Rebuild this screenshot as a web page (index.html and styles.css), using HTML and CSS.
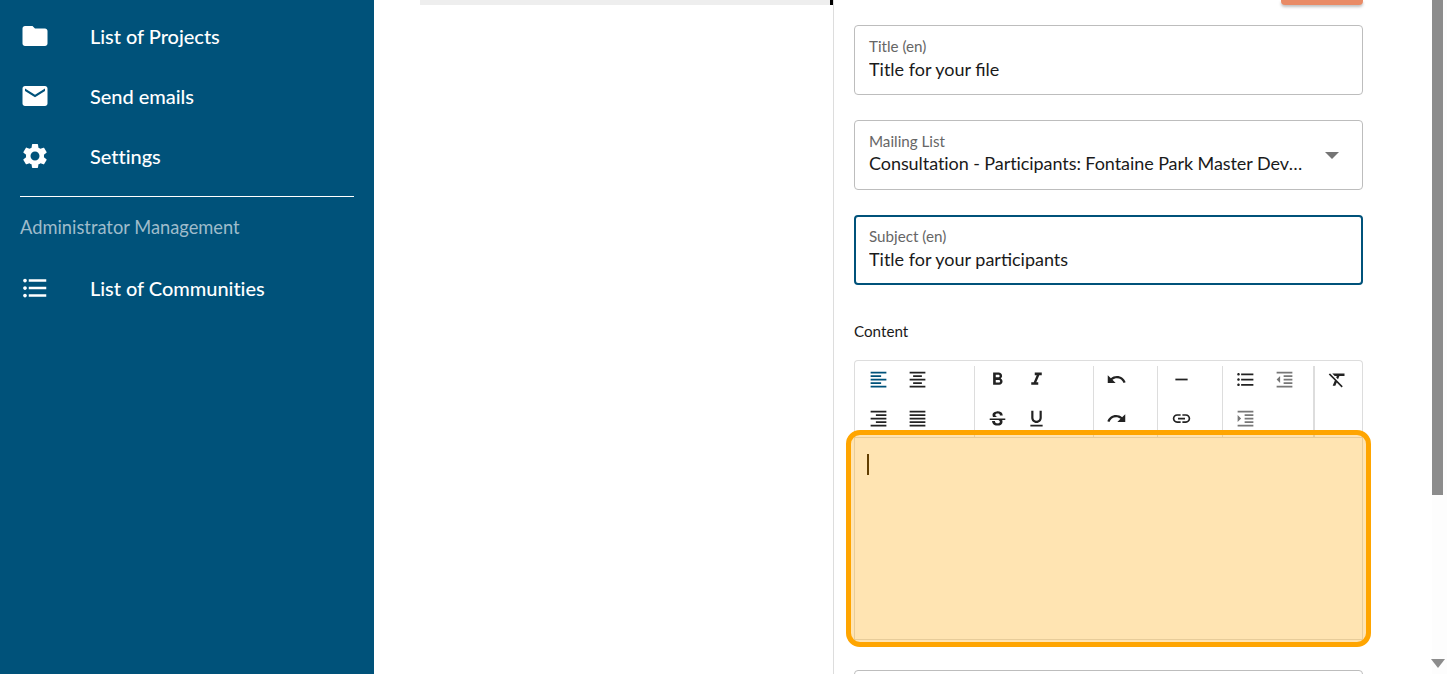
FILE: index.html
```html
<!DOCTYPE html>
<html lang="en">
<head>
    <meta charset="UTF-8">
    <title>Send emails</title>
    <link rel="stylesheet" href="styles.css">
</head>
<body>
    <div class="app">
        <nav class="sidebar">
            <a class="nav-item">
                <svg class="nav-icon" viewBox="0 0 24 24"><path d="M10 4H4c-1.1 0-2 .9-2 2v12c0 1.1.9 2 2 2h16c1.1 0 2-.9 2-2V8c0-1.1-.9-2-2-2h-8l-2-2z"/></svg>
                <span>List of Projects</span>
            </a>
            <a class="nav-item">
                <svg class="nav-icon" viewBox="0 0 24 24"><path d="M20 4H4c-1.1 0-1.99.9-1.99 2L2 18c0 1.1.9 2 2 2h16c1.1 0 2-.9 2-2V6c0-1.1-.9-2-2-2zm0 4l-8 5-8-5V6l8 5 8-5v2z"/></svg>
                <span>Send emails</span>
            </a>
            <a class="nav-item">
                <svg class="nav-icon" viewBox="0 0 24 24"><path d="M19.14 12.94c.04-.3.06-.61.06-.94 0-.32-.02-.64-.07-.94l2.03-1.58c.18-.14.23-.41.12-.61l-1.92-3.32c-.12-.22-.37-.29-.59-.22l-2.39.96c-.5-.38-1.03-.7-1.62-.94l-.36-2.54c-.04-.24-.24-.41-.48-.41h-3.84c-.24 0-.43.17-.47.41l-.36 2.54c-.59.24-1.13.57-1.62.94l-2.39-.96c-.22-.08-.47 0-.59.22L2.74 8.87c-.12.21-.08.47.12.61l2.03 1.58c-.05.3-.09.63-.09.94s.02.64.07.94l-2.03 1.58c-.18.14-.23.41-.12.61l1.92 3.32c.12.22.37.29.59.22l2.39-.96c.5.38 1.03.7 1.62.94l.36 2.54c.05.24.24.41.48.41h3.84c.24 0 .44-.17.47-.41l.36-2.54c.59-.24 1.13-.56 1.62-.94l2.39.96c.22.08.47 0 .59-.22l1.92-3.32c.12-.22.07-.47-.12-.61l-2.01-1.58zM12 15.6c-1.98 0-3.6-1.62-3.6-3.6s1.62-3.6 3.6-3.6 3.6 1.62 3.6 3.6-1.62 3.6-3.6 3.6z"/></svg>
                <span>Settings</span>
            </a>
            <div class="nav-divider"></div>
            <div class="nav-heading">Administrator Management</div>
            <a class="nav-item">
                <svg class="nav-icon" viewBox="0 0 24 24"><path d="M4 10.5c-.83 0-1.5.67-1.5 1.5s.67 1.5 1.5 1.5 1.5-.67 1.5-1.5-.67-1.5-1.5-1.5zm0-6c-.83 0-1.5.67-1.5 1.5S3.17 7.5 4 7.5 5.5 6.83 5.5 6 4.83 4.5 4 4.5zm0 12c-.83 0-1.5.68-1.5 1.5s.68 1.5 1.5 1.5 1.5-.68 1.5-1.5-.67-1.5-1.5-1.5zM7 19h14v-2H7v2zm0-6h14v-2H7v2zm0-8v2h14V5H7z"/></svg>
                <span>List of Communities</span>
            </a>
        </nav>

        <div class="preview-column">
            <div class="preview-bar"></div>
        </div>

        <main class="form-panel">
            <div class="form-actions">
                <button class="save-btn"></button>
            </div>

            <div class="field">
                <div class="field-label">Title (en)</div>
                <div class="field-value">Title for your file</div>
            </div>

            <div class="field field-select">
                <div class="field-text">
                    <div class="field-label">Mailing List</div>
                    <div class="field-value">Consultation - Participants: Fontaine Park Master Development Plan</div>
                </div>
                <span class="select-arrow"></span>
            </div>

            <div class="field field-focus">
                <div class="field-label">Subject (en)</div>
                <div class="field-value">Title for your participants</div>
            </div>

            <div class="content-label">Content</div>

            <div class="editor-toolbar">
                <div class="tool-group group-first">
                    <button class="tb-btn tb-active"><svg viewBox="0 0 24 24"><path d="M15 15H3v2h12v-2zm0-8H3v2h12V7zM3 13h18v-2H3v2zm0 8h18v-2H3v2zM3 3v2h18V3H3z"/></svg></button>
                    <button class="tb-btn"><svg viewBox="0 0 24 24"><path d="M7 15v2h10v-2H7zm-4 6h18v-2H3v2zm0-8h18v-2H3v2zm4-6v2h10V7H7zM3 3v2h18V3H3z"/></svg></button>
                    <button class="tb-btn"><svg viewBox="0 0 24 24"><path d="M3 21h18v-2H3v2zm6-4h12v-2H9v2zm-6-4h18v-2H3v2zm6-4h12V7H9v2zM3 3v2h18V3H3z"/></svg></button>
                    <button class="tb-btn"><svg viewBox="0 0 24 24"><path d="M3 21h18v-2H3v2zm0-4h18v-2H3v2zm0-4h18v-2H3v2zm0-4h18V7H3v2zm0-6v2h18V3H3z"/></svg></button>
                </div>
                <div class="tool-group group-marks">
                    <button class="tb-btn"><svg viewBox="0 0 24 24"><path d="M15.6 10.79c.97-.67 1.65-1.77 1.65-2.79 0-2.26-1.75-4-4-4H7v14h7.04c2.09 0 3.71-1.7 3.71-3.79 0-1.52-.86-2.82-2.15-3.42zM10 6.5h3c.83 0 1.5.67 1.5 1.5s-.67 1.5-1.5 1.5h-3v-3zm3.5 9H10v-3h3.5c.83 0 1.5.67 1.5 1.5s-.67 1.5-1.5 1.5z"/></svg></button>
                    <button class="tb-btn"><svg viewBox="0 0 24 24"><path d="M10 4v3h2.21l-3.42 8H6v3h8v-3h-2.21l3.42-8H18V4z"/></svg></button>
                    <button class="tb-btn tb-small"><svg viewBox="0 0 24 24"><path d="M23,12V14H18.61C19.61,16.14 19.56,22 12.38,22C4.05,22.05 4.37,15.5 4.37,15.5L8.34,15.55C8.37,18.92 11.5,18.92 12.12,18.88C12.76,18.83 15.15,18.84 15.34,16.5C15.42,15.41 14.32,14.58 13.12,14H1V12H23M19.41,7.89L15.43,7.86C15.43,7.86 15.6,5.09 12.15,5.08C8.7,5.06 9,7.28 9,7.56C9.04,7.84 9.34,9.22 12,9.88H5.71C5.71,9.88 2.22,3 10.74,2C19.45,1 19.41,7.89 19.41,7.89Z"/></svg></button>
                    <button class="tb-btn"><svg viewBox="0 0 24 24"><path d="M12 17c3.31 0 6-2.69 6-6V3h-2.5v8c0 1.93-1.57 3.5-3.5 3.5S8.5 12.93 8.5 11V3H6v8c0 3.31 2.69 6 6 6zm-7 2v2h14v-2H5z"/></svg></button>
                </div>
                <div class="tool-group group-history">
                    <button class="tb-btn"><svg viewBox="0 0 24 24"><path d="M12.5 8c-2.65 0-5.05.99-6.9 2.6L2 7v9h9l-3.62-3.62c1.39-1.16 3.16-1.88 5.12-1.88 3.54 0 6.55 2.31 7.6 5.5l2.37-.78C21.08 11.03 17.15 8 12.5 8z"/></svg></button>
                    <button class="tb-btn"><svg viewBox="0 0 24 24"><path d="M18.4 10.6C16.55 8.99 14.15 8 11.5 8c-4.65 0-8.58 3.03-9.96 7.22L3.9 16c1.05-3.19 4.05-5.5 7.6-5.5 1.95 0 3.73.72 5.12 1.88L13 16h9V7l-3.6 3.6z"/></svg></button>
                </div>
                <div class="tool-group group-insert">
                    <button class="tb-btn"><svg viewBox="0 0 24 24"><path d="M19 13H5v-2h14v2z"/></svg></button>
                    <button class="tb-btn"><svg viewBox="0 0 24 24"><path d="M3.9 12c0-1.71 1.39-3.1 3.1-3.1h4V7H7c-2.76 0-5 2.24-5 5s2.24 5 5 5h4v-1.9H7c-1.71 0-3.1-1.39-3.1-3.1zM8 13h8v-2H8v2zm9-6h-4v1.9h4c1.71 0 3.1 1.39 3.1 3.1s-1.39 3.1-3.1 3.1h-4V17h4c2.76 0 5-2.24 5-5s-2.24-5-5-5z"/></svg></button>
                </div>
                <div class="tool-group group-lists">
                    <button class="tb-btn"><svg viewBox="0 0 24 24"><path d="M4 10.5c-.83 0-1.5.67-1.5 1.5s.67 1.5 1.5 1.5 1.5-.67 1.5-1.5-.67-1.5-1.5-1.5zm0-6c-.83 0-1.5.67-1.5 1.5S3.17 7.5 4 7.5 5.5 6.83 5.5 6 4.83 4.5 4 4.5zm0 12c-.83 0-1.5.68-1.5 1.5s.68 1.5 1.5 1.5 1.5-.68 1.5-1.5-.67-1.5-1.5-1.5zM7 19h14v-2H7v2zm0-6h14v-2H7v2zm0-8v2h14V5H7z"/></svg></button>
                    <button class="tb-btn tb-disabled"><svg viewBox="0 0 24 24"><path d="M11 17h10v-2H11v2zm-8-5l4 4V8l-4 4zm0 9h18v-2H3v2zM3 3v2h18V3H3zm8 6h10V7H11v2zm0 4h10v-2H11v2z"/></svg></button>
                    <button class="tb-btn tb-disabled"><svg viewBox="0 0 24 24"><path d="M3 21h18v-2H3v2zM3 8v8l4-4-4-4zm8 9h10v-2H11v2zM3 3v2h18V3H3zm8 6h10V7H11v2zm0 4h10v-2H11v2z"/></svg></button>
                </div>
                <div class="tool-group group-last">
                    <button class="tb-btn"><svg viewBox="0 0 24 24"><path d="M3.27 5L2 6.27l6.97 6.97L6.5 19h3l1.57-3.66L16.73 21 18 19.73 3.55 5.27 3.27 5zM6 5v.18L8.82 8h2.4l-.72 1.68 2.1 2.1L14.21 8H20V5H6z"/></svg></button>
                </div>
            </div>

            <div class="editor-area">
                <span class="caret"></span>
                <div class="highlight"></div>
            </div>

            <div class="field field-next"></div>
        </main>

        <div class="scrollbar">
            <div class="scroll-thumb"></div>
            <span class="scroll-down"></span>
        </div>
    </div>
</body>
</html>
```

FILE: styles.css
```css
* {
    margin: 0;
    padding: 0;
    box-sizing: border-box;
}

html, body {
    height: 100%;
    overflow: hidden;
}

body {
    font-family: Lato, 'Open Sans', sans-serif;
    background: #fff;
    color: #1a1a1a;
}

.app {
    display: flex;
    height: 100vh;
    overflow: hidden;
}

/* sidebar */
.sidebar {
    width: 374px;
    flex-shrink: 0;
    background: #00527a;
    color: #fff;
    padding: 6px 20px 0;
}

.nav-item {
    display: flex;
    align-items: center;
    height: 60px;
    font-size: 20px;
    font-weight: 500;
    letter-spacing: -0.03px;
}

.nav-icon {
    width: 30px;
    height: 30px;
    margin-right: 40px;
    fill: #fff;
    flex-shrink: 0;
}

.nav-divider {
    height: 1px;
    background: #fff;
    margin-top: 10px;
}

.nav-heading {
    height: 61px;
    padding-top: 19px;
    font-size: 18.3px;
    line-height: 22px;
    color: #9fbccb;
}

/* middle column */
.preview-column {
    width: 459px;
    flex-shrink: 0;
    padding-left: 46px;
}

.preview-bar {
    height: 5px;
    background: #eee;
    border-right: 3px solid #000;
}

/* form */
.form-panel {
    width: 599px;
    flex-shrink: 0;
    border-left: 1px solid #ddd;
    padding: 0 69px 0 20px;
    height: 100%;
    overflow: hidden;
}

.form-actions {
    display: flex;
    justify-content: flex-end;
    height: 5px;
    margin-bottom: 20px;
}

.save-btn {
    width: 82px;
    height: 5px;
    border: none;
    border-radius: 0 0 4px 4px;
    background: #e98b66;
    box-shadow: 0 2px 3px rgba(0, 0, 0, 0.25);
}

.field {
    height: 70px;
    border: 1px solid #bdbdbd;
    border-radius: 4px;
    padding: 11px 14px 0;
    margin-bottom: 25px;
}

.field-label {
    font-size: 15.2px;
    line-height: 18px;
    color: #666;
}

.field-value {
    font-size: 18px;
    line-height: 26px;
    margin-top: 1px;
    white-space: nowrap;
    overflow: hidden;
    text-overflow: ellipsis;
}

.field-select {
    display: flex;
    align-items: flex-start;
}

.field-select .field-value {
    letter-spacing: -0.07px;
    margin-top: 0;
}

.field-text {
    flex: 1;
    min-width: 0;
}

.select-arrow {
    flex-shrink: 0;
    width: 0;
    height: 0;
    margin: 20px 9px 0 21px;
    border-left: 7px solid transparent;
    border-right: 7px solid transparent;
    border-top: 7px solid #757575;
}

.field-focus {
    border: 2px solid #00527a;
    padding: 10px 13px 0;
}

.content-label {
    font-size: 15.2px;
    line-height: 20px;
    margin-top: 36px;
    margin-bottom: 19px;
}

/* editor toolbar */
.editor-toolbar {
    display: flex;
    height: 77px;
    border: 1px solid #ddd;
    border-bottom: none;
    border-radius: 4px 4px 0 0;
}

.tool-group {
    display: flex;
    flex-wrap: wrap;
    align-content: flex-start;
    padding-left: 3px;
    flex-shrink: 0;
    height: 77px;
    position: relative;
}

/* separators stop short of the toolbar's top edge */
.tool-group::after {
    content: '';
    position: absolute;
    top: 5px;
    right: 0;
    bottom: 0;
    width: 1px;
    background: #ddd;
}

.group-first {
    width: 120px;
    padding-left: 4px;
}

.group-marks {
    width: 119px;
}

.group-history {
    width: 64px;
}

.group-insert {
    width: 65px;
    padding-left: 4px;
}

.group-lists {
    width: 92px;
}

.group-lists::after {
    width: 2px;
}

.group-last {
    flex: 1;
    padding-left: 3px;
}

.group-last::after {
    display: none;
}

.tb-btn {
    width: 39px;
    height: 39px;
    margin-top: -1px;
    margin-bottom: 1px;
    border: none;
    background: none;
    display: flex;
    align-items: center;
    justify-content: center;
}

.tb-btn svg {
    width: 21px;
    height: 21px;
    fill: #222;
}

.tb-btn.tb-small svg {
    width: 17px;
    height: 17px;
}

.tb-active svg {
    fill: #00527a;
}

.tb-disabled svg {
    fill: #777;
}

/* editor area */
.editor-area {
    position: relative;
    height: 203px;
    border: 1px solid #ddd;
    padding: 16px 12px;
    margin-bottom: 30px;
}

.caret {
    display: block;
    width: 2px;
    height: 21px;
    background: #1f1200;
}

.highlight {
    position: absolute;
    top: -8px;
    left: -9px;
    right: -9px;
    bottom: -8px;
    border: 5px solid #ffa500;
    border-radius: 14px;
    background: rgba(255, 165, 0, 0.3);
}

.field-next {
    margin-bottom: 0;
}

/* scrollbar */
.scrollbar {
    flex: 1;
    background: #fdfdfd;
    position: relative;
    display: flex;
    flex-direction: column;
}

.scroll-thumb {
    width: 11px;
    height: 495px;
    background: #8c8c8c;
}

.scroll-down {
    position: absolute;
    left: -1px;
    bottom: 6px;
    width: 0;
    height: 0;
    border-left: 7px solid transparent;
    border-right: 7px solid transparent;
    border-top: 9px solid #8c8c8c;
}
```
